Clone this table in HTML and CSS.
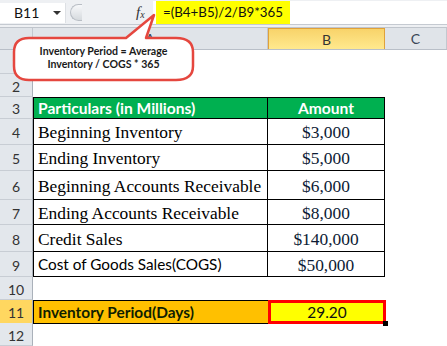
FILE: index.html
```html
<!DOCTYPE html>
<html>
<head>
<meta charset="utf-8">
<link rel="stylesheet" href="styles.css">
</head>
<body>
<div class="app">
  <div class="fbar">
    <div class="namebox"><span class="nb-text">B11</span><span class="nb-arrow"></span></div>
    <div class="splitter"><span class="knob"></span></div>
    <div class="fx"><i>f</i><sub>x</sub></div>
    <div class="formula"><span class="ftext">=(B4+B5)/2/B9*365</span></div>
  </div>
  <div class="sep"></div>
  <div class="sheet">
    <div class="row colhead">
      <div class="corner"></div>
      <div class="ch">A</div>
      <div class="ch sel">B</div>
      <div class="ch">C</div>
    </div>
    <div class="row r1"><div class="rh">1</div><div class="c"></div><div class="c"></div><div class="c"></div></div>
    <div class="row r2"><div class="rh">2</div><div class="c"></div><div class="c"></div><div class="c"></div></div>
    <div class="row r3 tbl"><div class="rh">3</div><div class="c a hd">Particulars (in Millions)</div><div class="c b hd">Amount</div><div class="c"></div></div>
    <div class="row r4 tbl"><div class="rh">4</div><div class="c a serif">Beginning Inventory</div><div class="c b serif">$3,000</div><div class="c"></div></div>
    <div class="row r5 tbl"><div class="rh">5</div><div class="c a serif">Ending Inventory</div><div class="c b serif">$5,000</div><div class="c"></div></div>
    <div class="row r6 tbl"><div class="rh">6</div><div class="c a serif">Beginning Accounts Receivable</div><div class="c b serif">$6,000</div><div class="c"></div></div>
    <div class="row r7 tbl"><div class="rh">7</div><div class="c a serif">Ending Accounts Receivable</div><div class="c b serif">$8,000</div><div class="c"></div></div>
    <div class="row r8 tbl"><div class="rh">8</div><div class="c a serif">Credit Sales</div><div class="c b serif">$140,000</div><div class="c"></div></div>
    <div class="row r9 tbl"><div class="rh">9</div><div class="c a sans">Cost of Goods Sales(COGS)</div><div class="c b serif">$50,000</div><div class="c"></div></div>
    <div class="row r10"><div class="rh">10</div><div class="c"></div><div class="c"></div><div class="c"></div></div>
    <div class="row r11"><div class="rh selr">11</div><div class="c a res">Inventory Period(Days)</div><div class="c b resv">29.20<span class="handle"></span></div><div class="c"></div></div>
    <div class="row r12"><div class="rh">12</div><div class="c"></div><div class="c"></div><div class="c"></div></div>
  </div>
  <div class="callout">
    <svg class="bubble" width="200" height="90" viewBox="0 0 200 90">
      <path d="M29 38 H126 L154 15 L146 38 H176 Q193 38 193 52 V66 Q193 80 176 80 H29 Q14 80 14 66 V52 Q14 38 29 38 Z" fill="#ffffff" stroke="#e5473f" stroke-width="2.5" stroke-linejoin="round"/>
    </svg>
    <div class="ctext">Inventory Period = Average<br>Inventory / COGS * 365</div>
  </div>
</div>
</body>
</html>
```
FILE: styles.css
```css
* { box-sizing: border-box; }
html, body { margin: 0; padding: 0; }
body { width: 447px; height: 346px; overflow: hidden; background: #fff; font-family: "Lato", "Liberation Sans", sans-serif; }
.app { position: relative; width: 447px; height: 346px; }

.fbar { height: 25px; display: flex; align-items: center; background: #eef0f3; border-bottom: 1px solid #c5cad1; }
.namebox { width: 66px; height: 20px; margin-top: 1px; background: #fff; display: flex; align-items: center; justify-content: space-between; padding: 0 4px 0 14px; border-right: 1px solid #dde0e4; }
.nb-text { font-size: 14px; color: #111; }
.nb-arrow { width: 0; height: 0; border-left: 4px solid transparent; border-right: 4px solid transparent; border-top: 4px solid #333; }
.splitter { width: 70px; height: 20px; display: flex; align-items: center; padding-left: 4px; }
.knob { width: 12px; height: 17px; border-radius: 9px 0 0 9px; background: linear-gradient(#f7f8fa, #d6dade); border: 1px solid #b9bec5; border-right: none; }
.fx { width: 14px; font-family: "Liberation Serif", serif; font-size: 15px; color: #333; margin-right: 3px; }
.fx sub { font-size: 10px; font-style: italic; vertical-align: -1px; }
.formula { flex: 1; height: 23px; background: #fff; display: flex; align-items: stretch; padding-left: 3px; margin-top: 1px; }
.ftext { background: #ffff00; padding: 0 7px 0 7px; font-size: 13.3px; line-height: 22px; color: #111; }

.sep { height: 3px; background: #eef0f3; border-bottom: 1px solid #c0c5cc; }

.sheet { display: flex; flex-direction: column; }
.row { display: grid; grid-template-columns: 33px 235px 117px 62px; }
.colhead { height: 22px; background: #e0e4e9; border-bottom: 1px solid #b9bfc8; }
.corner { border-right: 1px solid #c3c8cf; }
.ch { display: flex; align-items: center; justify-content: center; font-size: 14px; color: #3a4556; border-right: 1px solid #c3c8cf; }
.ch.sel { background: linear-gradient(#f8d36a, #ffe98e); border: 1px solid #e0a23a; border-bottom: none; color: #333; }

.rh { background: #e3e7ec; border-bottom: 1px solid #c8cdd4; border-right: 1px solid #aab1ba; display: flex; align-items: center; justify-content: center; font-size: 14px; color: #333; padding-top: 2px; }
.rh.selr { background: #ffd760; border-bottom-color: #e1a43a; }
.c { display: flex; align-items: center; }

.r1 { height: 24px; }
.r2 { height: 23px; }
.r3 { height: 22px; }
.r4 { height: 26px; }
.r5 { height: 26px; }
.r6 { height: 29px; }
.r7 { height: 25px; }
.r8 { height: 27px; }
.r9 { height: 25px; }
.r10 { height: 23px; }
.r11 { height: 23px; }
.r12 { height: 23px; }

.tbl .a, .tbl .b { border-bottom: 1px solid #000; border-right: 1px solid #000; }
.tbl .a { border-left: 1px solid #000; padding-left: 4px; }
.r3 .a, .r3 .b { border-top: 1px solid #000; }
.tbl .b { justify-content: center; }
.hd { background: #00b050; color: #fff; font-weight: bold; font-size: 15.6px; }
.serif { font-family: "Liberation Serif", serif; font-size: 17.4px; color: #000; padding-top: 2px; }
.b.serif { color: #0d1b35; }
.sans { font-size: 15.3px; color: #000; }

.res { background: #ffc000; border-top: 1px solid #000; border-bottom: 1px solid #000; border-left: 1px solid #000; padding-left: 4px; font-weight: bold; font-size: 15.4px; color: #0f1f00; }
.resv { position: relative; background: #ffff00; border: 3px solid #ff0000; justify-content: center; font-size: 15.4px; color: #111; margin-right: -1px; }
.handle { position: absolute; right: -5px; bottom: -5px; width: 5px; height: 5px; background: #000; }

.callout { position: absolute; left: 0; top: 0; width: 200px; height: 90px; }
.bubble { position: absolute; left: 0; top: 0; }
.ctext { position: absolute; left: 14px; top: 45px; width: 179px; text-align: center; font-size: 10.6px; line-height: 13px; font-weight: bold; color: #1a1a1a; }
```
